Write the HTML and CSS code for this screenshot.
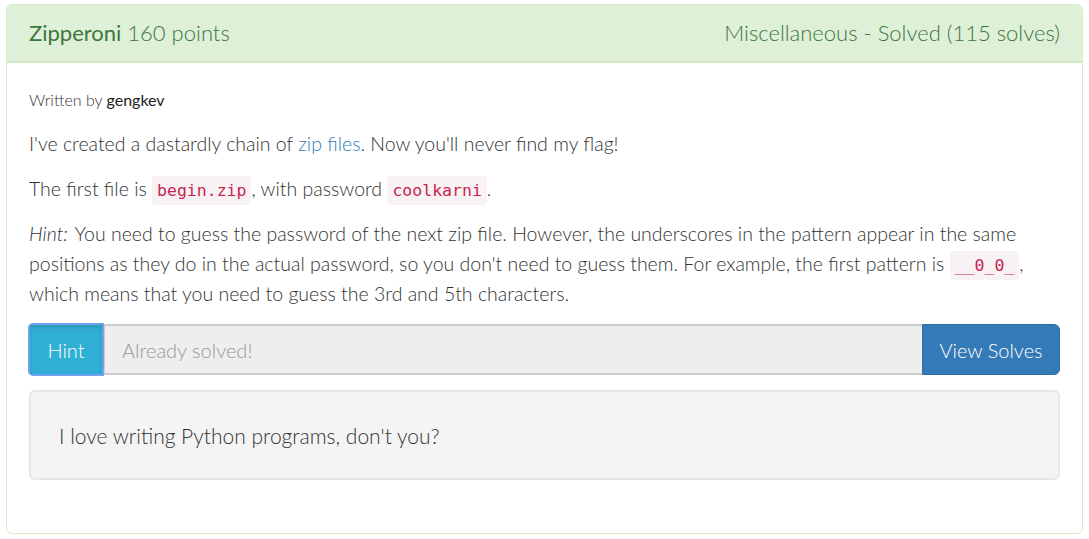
FILE: index.html
```html
<!DOCTYPE html>
<html>
<head>
<meta charset="utf-8">
<link rel="stylesheet" href="styles.css">
</head>
<body>
<div class="wrap">
  <div class="panel">
    <div class="panel-heading">
      <div class="title"><span class="name">Zipperoni</span> <span class="points">160 points</span></div>
      <div class="meta">Miscellaneous - Solved (115 solves)</div>
    </div>
    <div class="panel-body">
      <p class="author">Written by <span class="who">gengkev</span></p>
      <p>I've created a dastardly chain of <a href="#">zip files</a>. Now you'll never find my flag!</p>
      <p>The first file is <code>begin.zip</code>, with password <code>coolkarni</code>.</p>
      <p><em>Hint:</em> You need to guess the password of the next zip file. However, the underscores in the pattern appear in the same positions as they do in the actual password, so you don't need to guess them. For example, the first pattern is <code>__0_0_</code>, which means that you need to guess the 3rd and 5th characters.</p>
      <div class="input-group">
        <button class="btn btn-info">Hint</button>
        <input class="field" type="text" placeholder="Already solved!" disabled>
        <button class="btn btn-primary">View Solves</button>
      </div>
      <div class="well">I love writing Python programs, don't you?</div>
    </div>
  </div>
</div>
</body>
</html>
```

FILE: styles.css
```css
* { box-sizing: border-box; }
html, body { margin: 0; background: #fff; }
body {
  font-family: "Lato", "Open Sans", sans-serif;
  font-weight: 300;
  color: #333;
}
.wrap { padding: 4px 6px 5px 6px; }
.panel {
  border: 1px solid #d6e9c6;
  border-radius: 6px;
  height: 530px;
  overflow: hidden;
}
.panel-heading {
  background: #dff0d8;
  border-bottom: 2px solid #d6e9c6;
  color: #3c763d;
  height: 58px;
  padding: 0 22px 2px 22px;
  display: flex;
  align-items: center;
  justify-content: space-between;
  font-size: 22px;
}
.name { font-weight: 400; }
.points, .meta { font-weight: 300; }
.panel-body { padding: 27px 22px 20px 22px; }
p { margin: 0 0 15px 0; font-size: 19.5px; line-height: 30px; }
p.author { font-size: 16px; line-height: 20px; margin-bottom: 19px; }
.who { font-weight: 400; color: #222; }
a { color: #337ab7; text-decoration: none; }
code {
  font-family: "DejaVu Sans Mono", monospace;
  font-size: 16.5px;
  line-height: 1;
  color: #c7254e;
  background: #f9f2f4;
  padding: 5px 5px;
  border-radius: 4px;
}
em { font-style: italic; padding-right: 2px; }
.input-group {
  display: flex;
  height: 51px;
  margin-top: 12px;
}
.btn {
  font-family: "Lato", sans-serif;
  font-weight: 300;
  font-size: 20px;
  color: #fff;
  border: 1px solid transparent;
  padding: 0 10px;
  white-space: nowrap;
  cursor: pointer;
}
.btn-info {
  background: #31b0d5;
  border-color: #1f6f8a;
  border-radius: 4px 0 0 4px;
  width: 74px;
  box-shadow: inset 0 3px 5px rgba(0,0,0,.125);
  outline: 2px solid #6fa3ef;
  outline-offset: -1px;
  position: relative;
  z-index: 1;
}
.btn-primary {
  background: #337ab7;
  border-color: #2e6da4;
  border-radius: 0 6px 6px 0;
  width: 138px;
}
.field {
  flex: 1;
  min-width: 0;
  background: #eee;
  border: 1px solid #ccc;
  border-width: 2px 0 2px 2px;
  font-family: "Lato", sans-serif;
  font-weight: 300;
  font-size: 20px;
  padding: 0 17px;
  color: #555;
}
.field::placeholder { color: #999; }
.well {
  margin-top: 15px;
  background: #f4f4f4;
  border: 2px solid #e6e6e6;
  border-radius: 6px;
  height: 90px;
  padding: 0 28px;
  display: flex;
  align-items: center;
  font-family: "Lato", sans-serif;
  font-size: 21px;
  font-weight: 300;
  color: #333;
}
```
